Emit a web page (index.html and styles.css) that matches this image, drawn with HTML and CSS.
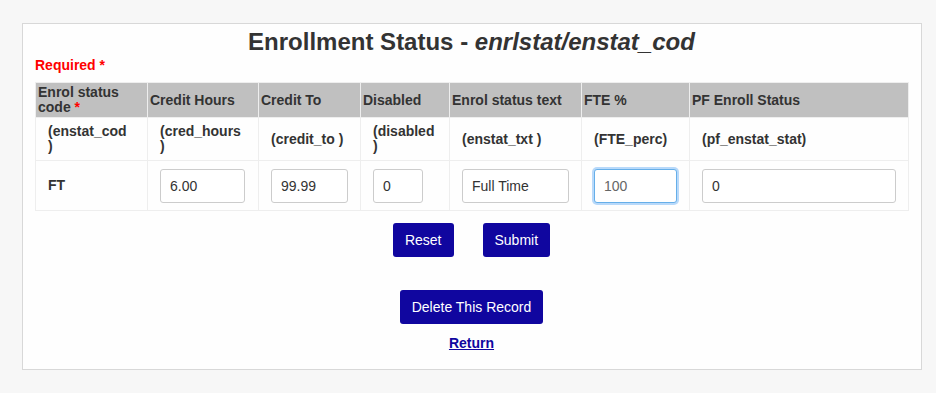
FILE: index.html
```html
<!DOCTYPE html>
<html>
  <head>
    <title>Enrollment Status</title>
    <link rel="stylesheet" href="styles.css">
  </head>
  <body>
    <div class="page-box">
      <h2 class="page-title">Enrollment Status - <em>enrlstat/enstat_cod</em></h2>
      <div class="required">Required <span>*</span></div>
      <form>
        <table class="edit-table">
          <colgroup>
            <col style="width:112px">
            <col style="width:111px">
            <col style="width:102px">
            <col style="width:89px">
            <col style="width:132px">
            <col style="width:108px">
            <col style="width:219px">
          </colgroup>
          <tr class="head-row">
            <th>Enrol status code <span class="star">*</span></th>
            <th>Credit Hours</th>
            <th>Credit To</th>
            <th>Disabled</th>
            <th>Enrol status text</th>
            <th>FTE %</th>
            <th>PF Enroll Status</th>
          </tr>
          <tr class="field-row">
            <td>(enstat_cod )</td>
            <td>(cred_hours )</td>
            <td>(credit_to )</td>
            <td>(disabled )</td>
            <td>(enstat_txt )</td>
            <td>(FTE_perc)</td>
            <td>(pf_enstat_stat)</td>
          </tr>
          <tr class="input-row">
            <td><b>FT</b></td>
            <td><input type="text" class="in-hours" value="6.00"></td>
            <td><input type="text" class="in-credit" value="99.99"></td>
            <td><input type="text" class="in-disabled" value="0"></td>
            <td><input type="text" class="in-text" value="Full Time"></td>
            <td><input type="text" class="in-fte focused" value="100"></td>
            <td><input type="text" class="in-pf" value="0"></td>
          </tr>
        </table>
        <div class="button-row">
          <button type="reset" class="btn">Reset</button>
          <button type="submit" class="btn">Submit</button>
        </div>
      </form>
      <div class="delete-row">
        <button class="btn">Delete This Record</button>
      </div>
      <div class="return-row"><a href="#">Return</a></div>
    </div>
  </body>
</html>
```

FILE: styles.css
```css
body {
  margin: 0;
  background-color: #f7f7f7;
  font-family: "Liberation Sans", Arial, sans-serif;
  color: #333;
}

.page-box {
  box-sizing: border-box;
  width: 900px;
  height: 347px;
  margin: 23px 0 0 22px;
  padding: 4px 13px 0 12px;
  background-color: #fefefe;
  border: 1px solid #d8d8d8;
}

.page-title {
  margin: 0;
  text-align: center;
  font-size: 24px;
  line-height: 28px;
  font-weight: bold;
  color: #333;
}

.page-title em {
  font-style: italic;
}

.required {
  margin-top: 1px;
  font-size: 14px;
  line-height: 16px;
  font-weight: bold;
  color: #ff0000;
}

.edit-table {
  width: 873px;
  margin-top: 9px;
  border-collapse: collapse;
  table-layout: fixed;
  font-size: 14px;
  line-height: 15px;
}

.edit-table th,
.edit-table td {
  border: 1px solid #eeeeee;
  vertical-align: middle;
  text-align: left;
}

.head-row th {
  height: 34px;
  padding: 0 2px;
  background-color: #c0c0c0;
  font-weight: bold;
  color: #333;
}

.star {
  color: #ff0000;
}

.field-row td {
  height: 42px;
  padding: 0 12px;
  font-weight: bold;
}

.input-row td {
  height: 49px;
  padding: 0 12px;
}

.input-row input {
  box-sizing: border-box;
  height: 34px;
  padding: 0 9px;
  border: 1px solid #cccccc;
  border-radius: 3px;
  font-family: "Liberation Sans", Arial, sans-serif;
  font-size: 14px;
  color: #333;
  background-color: #fff;
  display: block;
}

.in-hours { width: 85px; }
.in-credit { width: 77px; }
.in-disabled { width: 50px; }
.in-text { width: 107px; }
.in-fte { width: 83px; }
.in-pf { width: 194px; }

.input-row input.focused {
  border-color: #66afe9;
  box-shadow: 0 0 0 2px #b8d9fa;
  color: #666;
  outline: none;
}

.button-row {
  display: flex;
  justify-content: center;
  gap: 29px;
  margin-top: 12px;
}

.btn {
  height: 34px;
  padding: 0 12px;
  border: none;
  border-radius: 3px;
  background-color: #10069f;
  color: white;
  font-family: "Liberation Sans", Arial, sans-serif;
  font-size: 14px;
  cursor: pointer;
}

.delete-row {
  display: flex;
  justify-content: center;
  margin-top: 33px;
}

.return-row {
  margin-top: 11px;
  text-align: center;
  font-size: 14px;
  line-height: 16px;
  font-weight: bold;
}

.return-row a {
  color: #10069f;
}
```
